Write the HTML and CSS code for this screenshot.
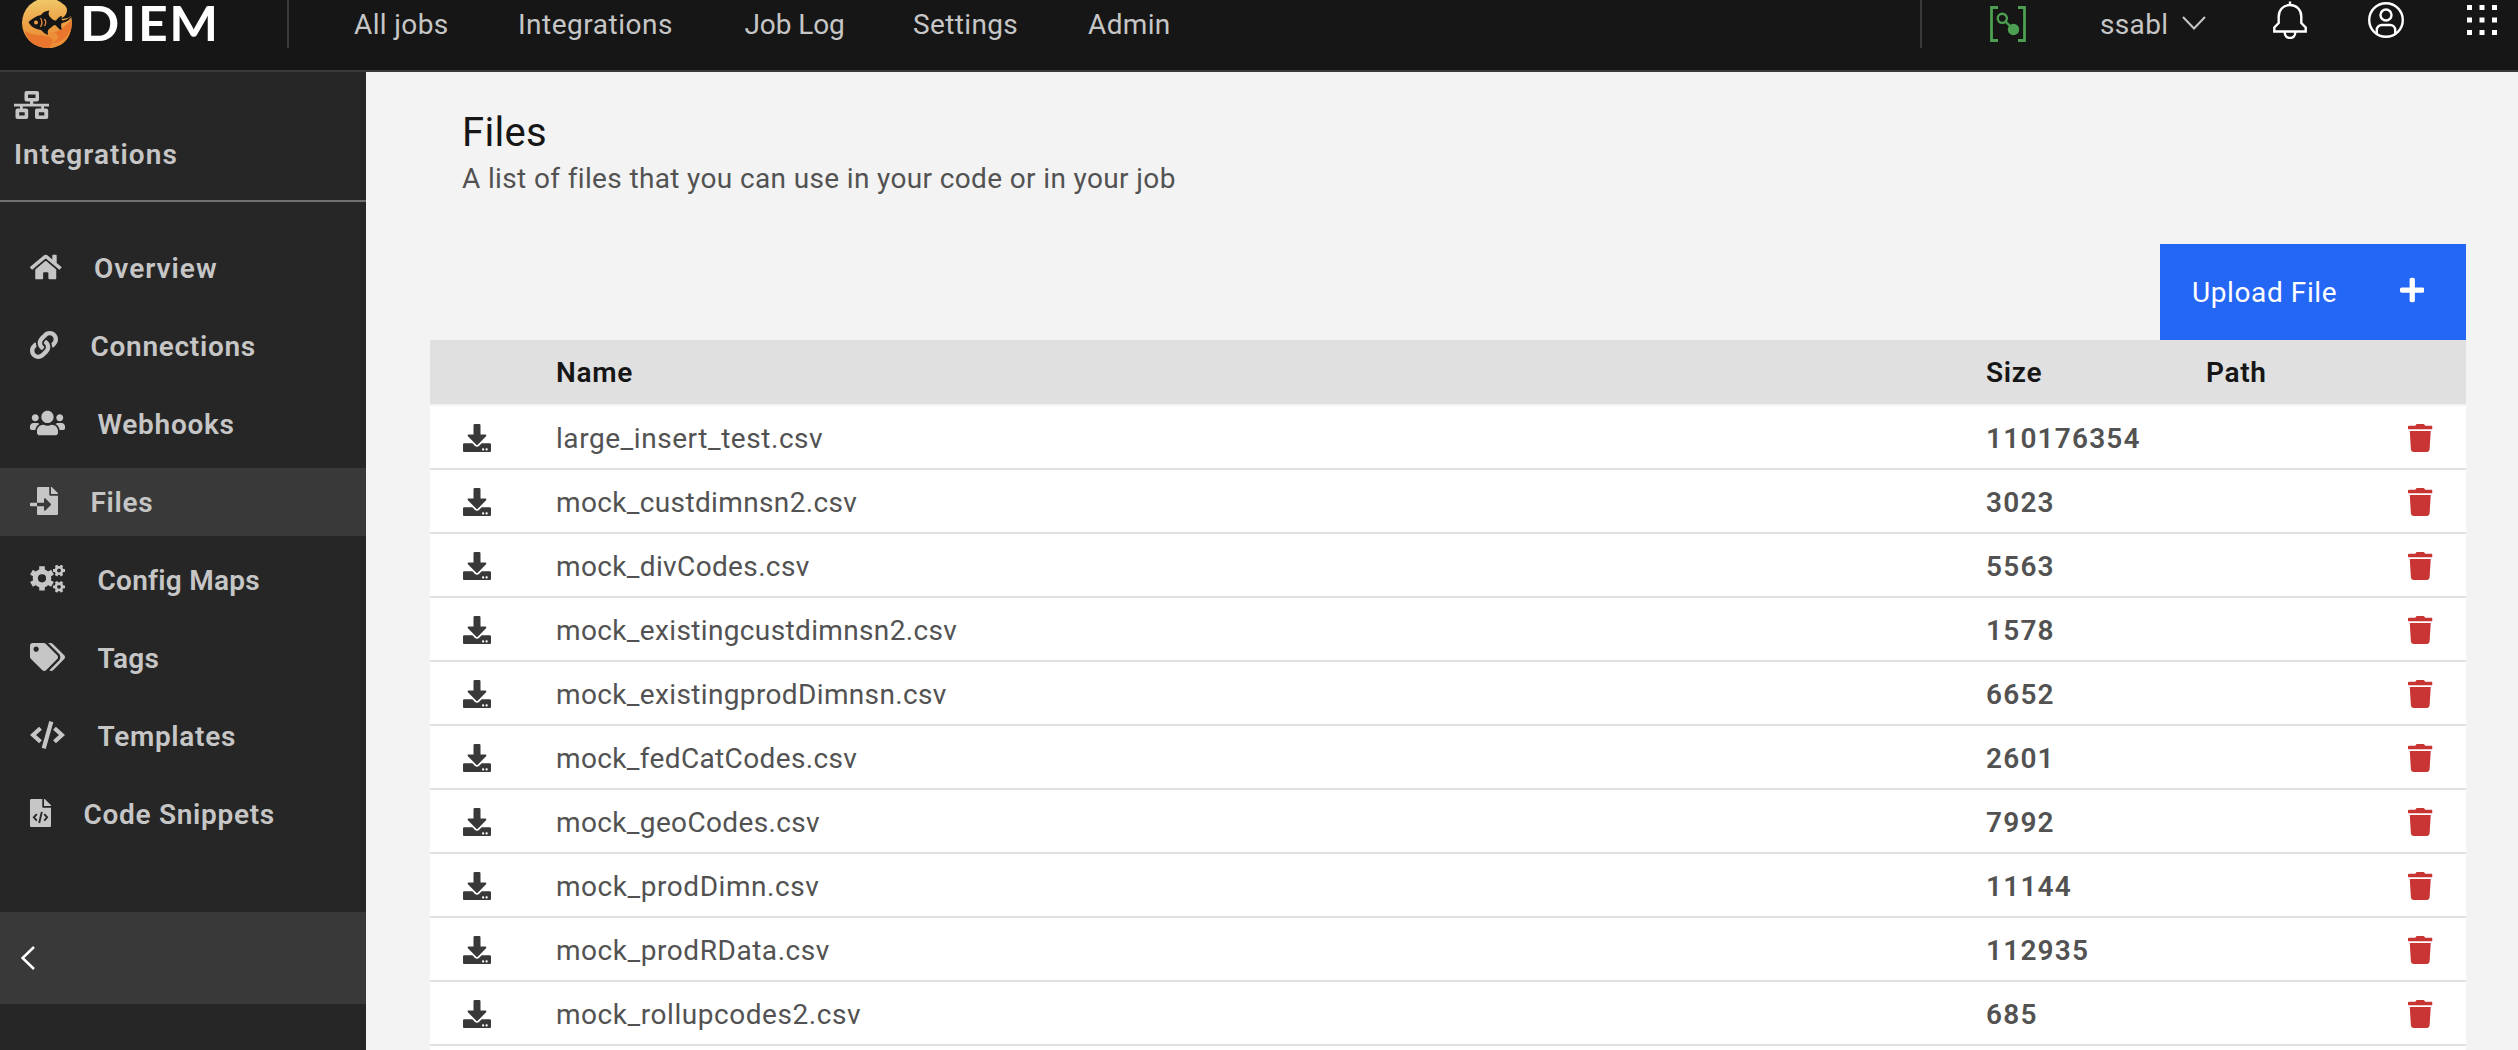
FILE: index.html
```html
<!DOCTYPE html>
<html lang="en">
<head>
<meta charset="utf-8">
<title>DIEM - Files</title>
<link rel="stylesheet" href="styles.css">
</head>
<body>
<svg class="sprite" aria-hidden="true">
  <symbol id="download" viewBox="0 0 512 512"><path d="M216 0h80c13.3 0 24 10.7 24 24v168h87.7c17.8 0 26.7 21.5 14.1 34.1L269.7 378.3c-7.5 7.5-19.8 7.5-27.3 0L90.1 226.1c-12.6-12.6-3.7-34.1 14.1-34.1H192V24c0-13.3 10.7-24 24-24zm296 376v112c0 13.3-10.7 24-24 24H24c-13.3 0-24-10.7-24-24V376c0-13.3 10.7-24 24-24h146.7l49 49c20.1 20.1 52.5 20.1 72.6 0l49-49H488c13.3 0 24 10.7 24 24zm-124 88c0-11-9-20-20-20s-20 9-20 20 9 20 20 20 20-9 20-20zm64 0c0-11-9-20-20-20s-20 9-20 20 9 20 20 20 20-9 20-20z"/></symbol>
  <symbol id="trash" viewBox="0 0 448 512"><path d="M432 32H312l-9.4-18.7A24 24 0 0 0 281.1 0H166.8a23.72 23.72 0 0 0-21.4 13.3L136 32H16A16 16 0 0 0 0 48v32a16 16 0 0 0 16 16h416a16 16 0 0 0 16-16V48a16 16 0 0 0-16-16zM32 128l21.200 339a48 48 0 0 0 47.900 45h245.800a48 48 0 0 0 47.900-45L416 128z"/></symbol>
</svg>

<header class="topbar">
  <a class="brand">
    <svg class="brand-mark" viewBox="0 0 50 48">
      <defs>
        <linearGradient id="bowl" x1="0.4" y1="0" x2="0.5" y2="1">
          <stop offset="0" stop-color="#efcb6b"/>
          <stop offset="0.5" stop-color="#eda045"/>
          <stop offset="1" stop-color="#e8872f"/>
        </linearGradient>
      </defs>
      <circle cx="25" cy="23" r="25" fill="url(#bowl)"/>
      <path d="M3 31C8 34 16 37 26 34C36 33 44 26 49 20C51 31 46 42 35 46C26 49 17 48 10 43C6 39 4 35 3 31Z" fill="#e9762c"/>
      <path d="M26 33C34 30 42 38 30 43C38 43 45 38 48 30C48 40 38 48 27 48C34 40 30 36 20 36Z" fill="#ec8f37"/>
      <path d="M52 2L43 3Q46 9 44.500 13Q43 17 38.500 18.500Q45 20 50.500 15Z" fill="#161616"/>
      <path d="M6.500 22C10 19 14 16 19 15C21 12 24 11 27.500 10.500C26 13 26.500 15 28 17C30 19 32 21 34 20.500C36 18 38 16 40 16C39 19 39.500 20 41 20.500C45 20 47 18 50 15.500C48 20 45 22 40 23C38 25 40 28 39.500 30C36 29 35 26 33 25C31 25 29 28 27 29C25 31 26 33 26 35C23 34 21 32 19 30C13 29 9 27 6.500 22Z" fill="#161616"/>
      <circle cx="14" cy="22.500" r="2" fill="#eda045"/>
      <path d="M18.500 18Q21.500 22.500 18.500 27M22.500 19Q25 22.500 22.500 26" fill="none" stroke="#e5873a" stroke-width="1.300"/>
    </svg>
    <span class="brand-name">DIEM</span>
  </a>
  <nav class="mainnav">
    <a>All jobs</a><a class="wider">Integrations</a><a class="tighter">Job Log</a><a>Settings</a><a>Admin</a>
  </nav>
  <div class="tools">
    <svg class="tool-status" viewBox="0 0 36 36" fill="none" stroke="#4c9f50">
      <path d="M8 1.500H1.500V34.500H8M28 1.500H34.500V34.500H28" stroke-width="2.800"/>
      <circle cx="12.300" cy="12.300" r="4.600" stroke-width="2.400"/>
      <path d="M15.500 15.500L21 21" stroke-width="2.400"/>
      <circle cx="23.500" cy="23.500" r="5.700" fill="#4c9f50" stroke="none"/>
    </svg>
    <span class="account">ssabl</span>
    <svg class="tool-caret" viewBox="0 0 24 14"><path d="M1 1L12 12.500L23 1"/></svg>
    <svg class="tool-bell" viewBox="0 0 34 38"><path d="M17 0.500V4M17 4C10.500 4 5.700 8.800 5.700 15.500V22L1.300 26.500V30.500H32.700V26.500L28.300 22V15.500C28.300 8.800 23.500 4 17 4ZM11.800 30.500V32A5.200 5 0 0 0 22.200 32V30.500"/></svg>
    <svg class="tool-user" viewBox="0 0 36 36"><circle cx="18" cy="18" r="16.800"/><circle cx="18" cy="13" r="5.500"/><path d="M8.800 32V28A5 5 0 0 1 13.800 23H22.200A5 5 0 0 1 27.200 28V32"/></svg>
    <svg class="tool-apps" viewBox="0 0 30 30"><path d="M0 0h5v5H0zM12.500 0h5v5h-5zM25 0h5v5h-5zM0 12.500h5v5H0zM12.500 12.500h5v5h-5zM25 12.500h5v5h-5zM0 25h5v5H0zM12.500 25h5v5h-5zM25 25h5v5h-5z"/></svg>
  </div>
</header>

<div class="shell">
  <aside class="sidebar">
    <div class="section">
      <svg class="section-icon" viewBox="0 0 35 28"><path fill-rule="evenodd" d="M12.500 0H23a2 2 0 0 1 2 2v6.500a2 2 0 0 1-2 2h-3.700V12.800H35v2.600h-5V17.500h2.200a2 2 0 0 1 2 2V26a2 2 0 0 1-2 2H23a2 2 0 0 1-2-2v-6.500a2 2 0 0 1 2-2h4.200v-2.100H8.800v2.100h3.400a2 2 0 0 1 2 2V26a2 2 0 0 1-2 2H3.500a2 2 0 0 1-2-2v-6.500a2 2 0 0 1 2-2H6v-2.100H0v-2.600h16v-2.300h-3.500a2 2 0 0 1-2-2V2a2 2 0 0 1 2-2zM14 3.600v3.300h7.500V3.600zM5.200 21.200v3.300h5.500v-3.300zM24.800 21.200v3.300h5.500v-3.300z"/></svg>
      <span class="section-name">Integrations</span>
    </div>
    <nav class="menu">
      <a class="item"><svg class="i36" viewBox="0 0 576 512"><path d="M280.370 148.260L96 300.110V464a16 16 0 0 0 16 16l112.060-.29a16 16 0 0 0 15.920-16V368a16 16 0 0 1 16-16h64a16 16 0 0 1 16 16v95.640a16 16 0 0 0 16 16.050L464 480a16 16 0 0 0 16-16V300L295.670 148.260a12.190 12.190 0 0 0-15.300 0zM571.600 251.470L488 182.560V44.050a12 12 0 0 0-12-12h-56a12 12 0 0 0-12 12v72.610L318.470 43a48 48 0 0 0-61 0L4.340 251.470a12 12 0 0 0-1.600 16.900l25.500 31A12 12 0 0 0 45.150 301l235.220-193.740a12.190 12.190 0 0 1 15.300 0L530.900 301a12 12 0 0 0 16.900-1.600l25.500-31a12 12 0 0 0-1.700-16.930z"/></svg><span class="wide">Overview</span></a>
      <a class="item"><svg class="i32" viewBox="0 0 512 512"><path d="M326.612 185.391c59.747 59.809 58.927 155.698.36 214.590-.11.12-.24.25-.36.37l-67.200 67.200c-59.270 59.270-155.699 59.262-214.960 0-59.270-59.260-59.270-155.700 0-214.960l37.106-37.106c9.840-9.840 26.786-3.300 27.294 10.606.648 17.722 3.826 35.527 9.690 52.721 1.986 5.822.567 12.262-3.783 16.612l-13.087 13.087c-28.026 28.026-28.905 73.660-1.155 101.960 28.024 28.579 74.086 28.749 102.325.51l67.200-67.190c28.191-28.191 28.073-73.757 0-101.830-3.701-3.694-7.429-6.564-10.341-8.569a16.037 16.037 0 0 1-6.947-12.606c-.396-10.567 3.348-21.456 11.698-29.806l21.054-21.055c5.521-5.521 14.182-6.199 20.584-1.731a152.482 152.482 0 0 1 20.522 17.197zM467.547 44.449c-59.261-59.262-155.690-59.270-214.960 0l-67.200 67.200c-.12.12-.25.25-.36.37-58.566 58.892-59.387 154.781.36 214.590a152.454 152.454 0 0 0 20.521 17.196c6.402 4.468 15.064 3.789 20.584-1.731l21.054-21.055c8.350-8.350 12.094-19.239 11.698-29.806a16.037 16.037 0 0 0-6.947-12.606c-2.912-2.005-6.640-4.875-10.341-8.569-28.073-28.073-28.191-73.639 0-101.830l67.200-67.190c28.239-28.239 74.300-28.069 102.325.51 27.750 28.300 26.872 73.934-1.155 101.960l-13.087 13.087c-4.350 4.350-5.769 10.790-3.783 16.612 5.864 17.194 9.042 34.999 9.690 52.721.509 13.906 17.454 20.446 27.294 10.606l37.106-37.106c59.271-59.259 59.271-155.699.001-214.959z"/></svg><span>Connections</span></a>
      <a class="item"><svg class="i40" viewBox="0 0 640 512"><path d="M96 224c35.300 0 64-28.700 64-64s-28.700-64-64-64-64 28.700-64 64 28.700 64 64 64zm448 0c35.300 0 64-28.700 64-64s-28.700-64-64-64-64 28.700-64 64 28.700 64 64 64zm32 32h-64c-17.600 0-33.500 7.100-45.100 18.600 40.300 22.100 68.900 62 75.100 109.400h66c17.700 0 32-14.300 32-32v-32c0-35.300-28.700-64-64-64zm-256 0c61.900 0 112-50.100 112-112S381.900 32 320 32 208 82.100 208 144s50.100 112 112 112zm76.800 32h-8.300c-20.800 10-43.900 16-68.500 16s-47.600-6-68.500-16h-8.300C179.600 288 128 339.600 128 403.200V432c0 26.500 21.500 48 48 48h288c26.500 0 48-21.500 48-48v-28.800c0-63.600-51.600-115.200-115.200-115.200zm-223.700-13.400C161.500 263.100 145.600 256 128 256H64c-35.300 0-64 28.700-64 64v32c0 17.700 14.300 32 32 32h65.900c6.300-47.400 34.900-87.300 75.200-109.400z"/></svg><span>Webhooks</span></a>
      <a class="item current"><svg class="i32" viewBox="0 0 512 512"><path d="M16 288c-8.800 0-16 7.200-16 16v32c0 8.800 7.200 16 16 16h112v-64zm489-183L407.100 7c-4.500-4.500-10.600-7-17-7H384v128h128v-6.100c0-6.300-2.500-12.400-7-16.900zm-153 31V0H152c-13.300 0-24 10.700-24 24v264h128v-65.200c0-14.300 17.300-21.400 27.400-11.300L379 308c6.600 6.700 6.600 17.400 0 24l-95.700 96.400c-10.100 10.100-27.400 3-27.400-11.300V352H128v136c0 13.300 10.700 24 24 24h336c13.300 0 24-10.700 24-24V160H376c-13.200 0-24-10.800-24-24z"/></svg><span>Files</span></a>
      <a class="item"><svg class="i40" viewBox="0 0 35 28"><g fill="none" stroke="#c6c6c6"><circle cx="12" cy="13.300" r="6.700" stroke-width="5.200"/><path stroke-width="5.600" d="M12 5.300V1.200M12 21.300V25.400M18.900 9.300L22.500 7.200M18.900 17.300L22.500 19.400M5.100 9.300L1.500 7.200M5.100 17.300L1.500 19.400"/><circle cx="29" cy="5.500" r="3.200" stroke-width="2.600"/><circle cx="29" cy="21.800" r="3.200" stroke-width="2.600"/><path stroke-width="2.800" d="M32.500 5.500H35M25.500 5.500H23M30.700 8.500L32 10.700M27.300 8.500L26 10.700M30.700 2.500L32 .3M27.300 2.500L26 .3M32.500 21.800H35M25.500 21.800H23M30.700 24.800L32 27M27.300 24.800L26 27M30.700 18.800L32 16.600M27.300 18.800L26 16.600"/></g></svg><span class="narrow">Config Maps</span></a>
      <a class="item"><svg class="i40" viewBox="0 0 640 512"><path d="M497.941 225.941L286.059 14.059A48 48 0 0 0 252.118 0H48C21.490 0 0 21.490 0 48v204.118a48 48 0 0 0 14.059 33.941l211.882 211.882c18.744 18.745 49.136 18.746 67.882 0l204.118-204.118c18.745-18.745 18.745-49.137 0-67.882zM112 160c-26.510 0-48-21.490-48-48s21.490-48 48-48 48 21.490 48 48-21.490 48-48 48zm513.941 133.823L421.823 497.941c-18.745 18.745-49.137 18.745-67.882 0l-.36-.36L527.640 323.522c16.999-16.999 26.360-39.600 26.360-63.640s-9.362-46.641-26.360-63.640L331.397 0h48.721a48 48 0 0 1 33.941 14.059l211.882 211.882c18.745 18.745 18.745 49.137 0 67.882z"/></svg><span class="narrow">Tags</span></a>
      <a class="item"><svg class="i40" viewBox="0 0 35 28"><path fill="none" stroke="#c6c6c6" stroke-width="4.200" d="M10.500 7.200L3 14L10.500 20.800M24.500 7.200L32 14L24.500 20.800M21.300 .7L13.700 27.300"/></svg><span>Templates</span></a>
      <a class="item"><svg class="i24" viewBox="0 0 384 512"><path d="M384 121.941V128H256V0h6.059c6.365 0 12.470 2.529 16.971 7.029l97.941 97.941A24.005 24.005 0 0 1 384 121.941zM248 160c-13.200 0-24-10.800-24-24V0H24C10.745 0 0 10.745 0 24v464c0 13.255 10.745 24 24 24h336c13.255 0 24-10.745 24-24V160H248z"/><path fill="none" stroke="#262626" stroke-width="34" d="M124 275L70 335L124 395M260 275L314 335L260 395M216 235L168 440"/></svg><span>Code Snippets</span></a>
    </nav>
    <button class="collapse"><svg class="collapse-icon" viewBox="0 0 14 24"><path d="M13 1L1.500 12L13 23"/></svg></button>
  </aside>

  <main class="content">
    <div class="intro">
      <h1>Files</h1>
      <p>A list of files that you can use in your code or in your job</p>
    </div>
    <div class="actions">
      <button class="upload"><span>Upload File</span><svg class="upload-icon" viewBox="0 0 448 512"><path d="M416 208H272V64c0-17.670-14.330-32-32-32h-32c-17.670 0-32 14.330-32 32v144H32c-17.670 0-32 14.330-32 32v32c0 17.670 14.330 32 32 32h144v144c0 17.670 14.330 32 32 32h32c17.670 0 32-14.330 32-32V304h144c17.670 0 32-14.330 32-32v-32c0-17.670-14.330-32-32-32z"/></svg></button>
    </div>
    <table class="files">
      <colgroup><col class="c-get"><col class="c-name"><col class="c-size"><col class="c-path"><col class="c-del"></colgroup>
      <thead><tr><th></th><th>Name</th><th>Size</th><th>Path</th><th></th></tr></thead>
      <tbody>
        <tr><td class="get"><svg><use href="#download"/></svg></td><td class="loose">large_insert_test.csv</td><td class="size">110176354</td><td></td><td class="del"><svg><use href="#trash"/></svg></td></tr>
        <tr><td class="get"><svg><use href="#download"/></svg></td><td>mock_custdimnsn2.csv</td><td class="size">3023</td><td></td><td class="del"><svg><use href="#trash"/></svg></td></tr>
        <tr><td class="get"><svg><use href="#download"/></svg></td><td>mock_divCodes.csv</td><td class="size">5563</td><td></td><td class="del"><svg><use href="#trash"/></svg></td></tr>
        <tr><td class="get"><svg><use href="#download"/></svg></td><td>mock_existingcustdimnsn2.csv</td><td class="size">1578</td><td></td><td class="del"><svg><use href="#trash"/></svg></td></tr>
        <tr><td class="get"><svg><use href="#download"/></svg></td><td>mock_existingprodDimnsn.csv</td><td class="size">6652</td><td></td><td class="del"><svg><use href="#trash"/></svg></td></tr>
        <tr><td class="get"><svg><use href="#download"/></svg></td><td>mock_fedCatCodes.csv</td><td class="size">2601</td><td></td><td class="del"><svg><use href="#trash"/></svg></td></tr>
        <tr><td class="get"><svg><use href="#download"/></svg></td><td>mock_geoCodes.csv</td><td class="size">7992</td><td></td><td class="del"><svg><use href="#trash"/></svg></td></tr>
        <tr><td class="get"><svg><use href="#download"/></svg></td><td class="loose">mock_prodDimn.csv</td><td class="size">11144</td><td></td><td class="del"><svg><use href="#trash"/></svg></td></tr>
        <tr><td class="get"><svg><use href="#download"/></svg></td><td class="loose">mock_prodRData.csv</td><td class="size">112935</td><td></td><td class="del"><svg><use href="#trash"/></svg></td></tr>
        <tr><td class="get"><svg><use href="#download"/></svg></td><td class="loose">mock_rollupcodes2.csv</td><td class="size">685</td><td></td><td class="del"><svg><use href="#trash"/></svg></td></tr>
        <tr class="next"><td></td><td></td><td></td><td></td><td></td></tr>
      </tbody>
    </table>
  </main>
</div>
</body>
</html>
```
FILE: styles.css
```css
* { box-sizing: border-box; }

body {
  margin: 0;
  height: 1050px;
  overflow: hidden;
  display: flex;
  flex-direction: column;
  background: #f3f3f3;
  font-family: Roboto, "Liberation Sans", sans-serif;
  font-size: 28px;
  line-height: 36px;
  letter-spacing: 0.36px;
  color: #525252;
}

svg { display: block; flex: none; }
button { font: inherit; letter-spacing: inherit; border: 0; padding: 0; text-align: left; }
.sprite { width: 0; height: 0; position: absolute; }

/* Top bar */
.topbar {
  flex: none;
  height: 72px;
  padding-bottom: 22px;
  display: flex;
  align-items: center;
  background: #161616;
  border-bottom: 2px solid #393939;
  color: #c6c6c6;
}
.brand {
  width: 289px;
  height: 48px;
  padding-left: 22px;
  display: flex;
  align-items: center;
  gap: 8px;
  border-right: 2px solid #393939;
}
.brand-mark { width: 50px; height: 48px; }
.brand-name {
  font-family: Lato, sans-serif;
  font-size: 47px;
  line-height: 46px;
  padding-bottom: 2px;
  font-weight: 700;
  letter-spacing: 1.500px;
  color: #fff;
  transform: scaleX(1.1);
  transform-origin: 0 50%;
}
.mainnav {
  display: grid;
  grid-template-columns: 164px 226.500px 168.500px 175px auto;
  padding: 2px 0 0 65px;
}
.mainnav .wider { letter-spacing: 0.5px; }
.mainnav .tighter { letter-spacing: -0.1px; }
.tools {
  margin-left: auto;
  height: 48px;
  width: 598px;
  padding-left: 68px;
  display: flex;
  align-items: center;
  border-left: 2px solid #393939;
}
.tool-status { width: 36px; height: 36px; }
.account { width: 82px; margin-left: 74px; padding-top: 2px; }
.tool-caret, .tool-bell, .tool-user { fill: none; stroke: #fff; stroke-width: 2.400; }
.tool-caret { width: 24px; height: 14px; stroke: #c6c6c6; stroke-width: 2; margin-top: -3px; }
.tool-bell { width: 34px; height: 38px; margin: -9px 0 0 67px; }
.tool-user { width: 36px; height: 36px; margin: -8px 0 0 61px; }
.tool-apps { width: 30px; height: 30px; margin: -8px 0 0 63px; fill: #fff; }

/* Side bar */
.shell { flex: 1; display: flex; min-height: 0; }
.sidebar {
  flex: none;
  width: 366px;
  background: #262626;
  color: #c6c6c6;
  fill: #c6c6c6;
  font-weight: 600;
  letter-spacing: 0.7px;
}
.section {
  height: 130px;
  padding: 19px 14px 0;
  border-bottom: 2px solid #6f6f6f;
}
.section-icon { width: 35px; height: 28px; }
.section-name { display: block; margin-top: 18px; letter-spacing: 1.050px; }
.menu {
  padding-top: 32px;
  display: flex;
  flex-direction: column;
  gap: 10px;
}
.item {
  height: 68px;
  padding-left: 30px;
  display: flex;
  align-items: center;
  gap: 32.500px;
}
.item.current { background: #393939; }
.item span { padding-top: 2px; }
.item .wide { letter-spacing: 1px; }
.item .narrow { letter-spacing: 0.25px; }
.item svg { height: 28px; margin-top: -2px; }
.i24 { width: 21px; }
.i32 { width: 28px; }
.i36 { width: 31.500px; }
.i40 { width: 35px; }
.collapse {
  display: block;
  margin-top: 64px;
  width: 100%;
  height: 92px;
  padding-left: 21px;
  background: #393939;
}
.collapse-icon { width: 14px; height: 24px; fill: none; stroke: #fff; stroke-width: 2.600; }

/* Content */
.content { flex: 1; padding: 0 52px 0 64px; }
.intro { height: 172px; padding: 35px 0 0 32px; }
.intro h1 {
  margin: 0;
  font-size: 40px;
  line-height: 52px;
  font-weight: 400;
  letter-spacing: 0.3px;
  color: #161616;
}
.intro p { margin: 2px 0 0; }
.actions { display: flex; justify-content: flex-end; }
.upload {
  width: 306px;
  height: 96px;
  padding: 0 42px 0 32px;
  display: flex;
  align-items: center;
  justify-content: space-between;
  background: #2567f5;
  color: #fff;
  letter-spacing: 0.6px;
}
.upload span { padding-top: 1px; }
.upload-icon { width: 24.500px; height: 28px; fill: #fff; margin-top: -4px; }

.files {
  width: 2036px;
  table-layout: fixed;
  border-collapse: separate;
  border-spacing: 0;
}
.c-get { width: 126px; }
.c-name { width: 1430px; }
.c-size { width: 220px; }
.c-path { width: 202px; }
.c-del { width: 58px; }
.files th {
  height: 66px;
  padding: 2px 0 0;
  background: #e0e0e0;
  border-bottom: 2px solid #f3f3f3;
  text-align: left;
  font-weight: 600;
  letter-spacing: 0.7px;
  color: #161616;
}
.files td {
  height: 64px;
  padding: 4px 0 0;
  background: #fff;
  border-bottom: 2px solid #e0e0e0;
}
.files .loose { letter-spacing: 0.55px; }
.files .size { font-weight: 600; letter-spacing: 1.200px; }
.files .get { padding: 1px 0 0 33px; }
.files .del { padding: 1px 0 0; }
.files .next td { height: 4px; padding: 0; border-bottom: 0; }
.get svg { width: 28px; height: 28px; fill: #393939; }
.del svg { width: 24.500px; height: 28px; fill: #c93434; }
```
